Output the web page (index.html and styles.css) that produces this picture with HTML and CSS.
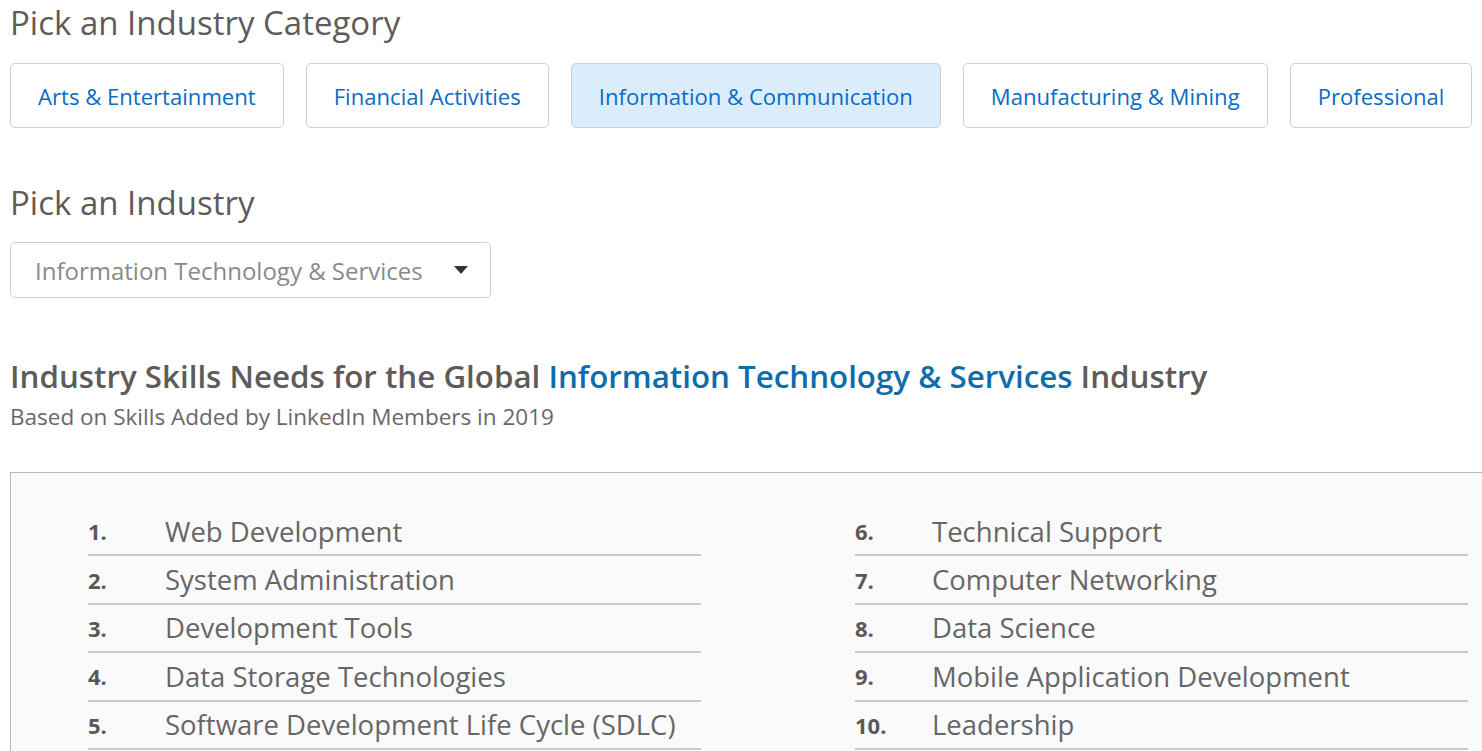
FILE: index.html
```html
<!DOCTYPE html>
<html lang="en">
<head>
<meta charset="utf-8">
<title>Industry Skills</title>
<link rel="stylesheet" href="styles.css">
</head>
<body>
<main class="page">
  <h2 class="pick-title">Pick an Industry Category</h2>
  <div class="categories">
    <button class="cat">Arts &amp; Entertainment</button>
    <button class="cat">Financial Activities</button>
    <button class="cat cat-active">Information &amp; Communication</button>
    <button class="cat">Manufacturing &amp; Mining</button>
    <button class="cat">Professional</button>
  </div>

  <h2 class="pick-title pick-industry">Pick an Industry</h2>
  <div class="select">
    <span class="select-text">Information Technology &amp; Services</span>
    <svg class="caret" width="14" height="8" viewBox="0 0 14 8"><path d="M0 0h14L7 8z" fill="#333"/></svg>
  </div>

  <h1 class="skills-title">Industry Skills Needs for the Global <span class="hl">Information Technology &amp; Services</span> Industry</h1>
  <p class="subtitle">Based on Skills Added by LinkedIn Members in 2019</p>

  <section class="skills-box">
    <ol class="skills-col">
      <li><span class="num">1.</span><span class="skill">Web Development</span></li>
      <li><span class="num">2.</span><span class="skill">System Administration</span></li>
      <li><span class="num">3.</span><span class="skill">Development Tools</span></li>
      <li><span class="num">4.</span><span class="skill">Data Storage Technologies</span></li>
      <li><span class="num">5.</span><span class="skill">Software Development Life Cycle (SDLC)</span></li>
    </ol>
    <ol class="skills-col">
      <li><span class="num">6.</span><span class="skill">Technical Support</span></li>
      <li><span class="num">7.</span><span class="skill">Computer Networking</span></li>
      <li><span class="num">8.</span><span class="skill">Data Science</span></li>
      <li><span class="num">9.</span><span class="skill">Mobile Application Development</span></li>
      <li><span class="num">10.</span><span class="skill">Leadership</span></li>
    </ol>
  </section>
</main>
</body>
</html>
```

FILE: styles.css
```css
html, body {
  margin: 0;
  padding: 0;
  background: #fff;
  overflow: hidden;
}
.page {
  padding: 0 0 0 10px;
  width: 1560px;
  font-family: "Open Sans", sans-serif;
}
.pick-title {
  margin: 0;
  padding-top: 4px;
  font-family: "Open Sans", sans-serif;
  font-weight: 400;
  font-size: 33px;
  line-height: 38px;
  color: #5f5b5a;
}
.categories {
  display: flex;
  gap: 22px;
  margin-top: 21px;
}
.cat {
  height: 65px;
  padding: 0 27px;
  background: #fff;
  border: 1px solid #cfcfcf;
  border-radius: 5px;
  font-family: "Open Sans", sans-serif;
  font-size: 22.1px;
  color: #0a6cc4;
  white-space: nowrap;
}
.cat-active {
  background: #dbedfb;
}
.pick-industry {
  margin-top: 52px;
}
.select {
  display: flex;
  align-items: center;
  justify-content: space-between;
  box-sizing: border-box;
  width: 481px;
  height: 56px;
  margin-top: 20px;
  padding: 0 22px 0 24px;
  border: 1px solid #cfcfcf;
  border-radius: 5px;
  font-size: 24px;
  color: #8a8a8a;
}
.caret { display: block; }
.skills-title {
  margin: 58px 0 0;
  font-family: "Open Sans", sans-serif;
  font-weight: 600;
  font-size: 31.3px;
  line-height: 40px;
  color: #5f5b5a;
}
.hl { color: #0f6cab; }
.subtitle {
  margin: 7px 0 0;
  font-family: "Open Sans", sans-serif;
  font-size: 22.5px;
  line-height: 28px;
  color: #6b6767;
}
.skills-box {
  display: flex;
  gap: 154px;
  margin-top: 41px;
  padding: 35px 0 40px 77px;
  border: 1px solid #b8b8b8;
  background: #fafafa;
}
.skills-col {
  list-style: none;
  margin: 0;
  padding: 0;
  width: 613px;
}
.skills-col li {
  display: flex;
  align-items: center;
  height: 46.4px;
  border-bottom: 2px solid #c9c9c9;
}
.num {
  width: 77px;
  font-weight: 700;
  font-size: 22px;
  color: #5a5757;
}
.skill {
  font-size: 27.5px;
  color: #666;
}
```
